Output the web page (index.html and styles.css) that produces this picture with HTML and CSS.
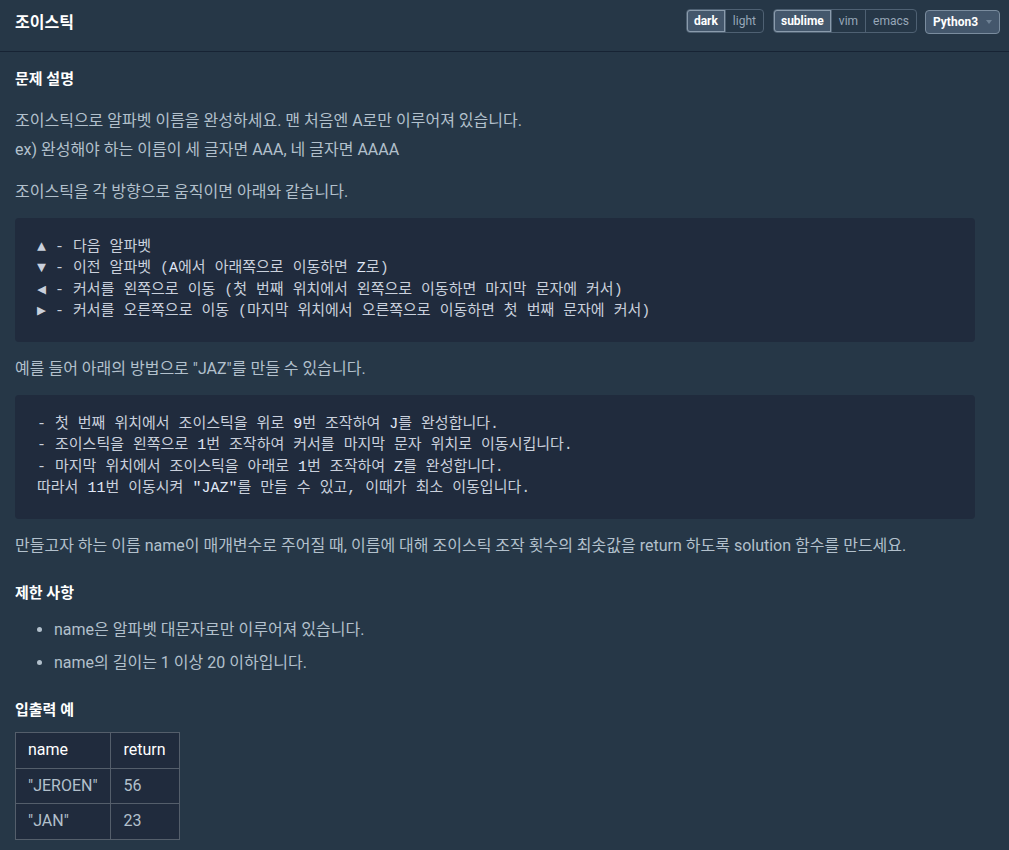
FILE: index.html
```html
<!DOCTYPE html>
<html lang="ko">
<head>
<meta charset="utf-8">
<title>조이스틱</title>
<link rel="stylesheet" href="styles.css">
</head>
<body>
<header class="topbar">
  <h1 class="title">조이스틱</h1>
  <div class="controls">
    <div class="seg">
      <span class="seg-btn active">dark</span>
      <span class="seg-btn">light</span>
    </div>
    <div class="seg">
      <span class="seg-btn active">sublime</span>
      <span class="seg-btn">vim</span>
      <span class="seg-btn">emacs</span>
    </div>
    <div class="lang-select">Python3<span class="caret"></span></div>
  </div>
</header>
<main class="content">
  <h5 class="heading first">문제 설명</h5>
  <p class="lead">조이스틱으로 알파벳 이름을 완성하세요. 맨 처음엔 A로만 이루어져 있습니다.<br>ex) 완성해야 하는 이름이 세 글자면 AAA, 네 글자면 AAAA</p>
  <p>조이스틱을 각 방향으로 움직이면 아래와 같습니다.</p>
  <div class="code">
    <span class="ln">▲ - 다음 알파벳</span>
    <span class="ln">▼ - 이전 알파벳 (<span class="hl">A</span>에서 아래쪽으로 이동하면 <span class="hl">Z</span>로)</span>
    <span class="ln">◀ - 커서를 왼쪽으로 이동 (첫 번째 위치에서 왼쪽으로 이동하면 마지막 문자에 커서)</span>
    <span class="ln">▶ - 커서를 오른쪽으로 이동 (마지막 위치에서 오른쪽으로 이동하면 첫 번째 문자에 커서)</span>
  </div>
  <p>예를 들어 아래의 방법으로 "JAZ"를 만들 수 있습니다.</p>
  <div class="code">
    <span class="ln">- 첫 번째 위치에서 조이스틱을 위로 <span class="hl">9</span>번 조작하여 <span class="hl">J</span>를 완성합니다.</span>
    <span class="ln">- 조이스틱을 왼쪽으로 <span class="hl">1</span>번 조작하여 커서를 마지막 문자 위치로 이동시킵니다.</span>
    <span class="ln">- 마지막 위치에서 조이스틱을 아래로 <span class="hl">1</span>번 조작하여 <span class="hl">Z</span>를 완성합니다.</span>
    <span class="ln">따라서 <span class="hl">11</span>번 이동시켜 <span class="hl">"JAZ"</span>를 만들 수 있고, 이때가 최소 이동입니다.</span>
  </div>
  <p>만들고자 하는 이름 name이 매개변수로 주어질 때, 이름에 대해 조이스틱 조작 횟수의 최솟값을 return 하도록 solution 함수를 만드세요.</p>
  <h5 class="heading">제한 사항</h5>
  <ul class="list">
    <li>name은 알파벳 대문자로만 이루어져 있습니다.</li>
    <li>name의 길이는 1 이상 20 이하입니다.</li>
  </ul>
  <h5 class="heading">입출력 예</h5>
  <table class="examples">
    <thead>
      <tr><th>name</th><th>return</th></tr>
    </thead>
    <tbody>
      <tr><td>"JEROEN"</td><td>56</td></tr>
      <tr><td>"JAN"</td><td>23</td></tr>
    </tbody>
  </table>
</main>
</body>
</html>
```
FILE: styles.css
```css
html, body {
  margin: 0;
  padding: 0;
  background: #263747;
}
body {
  font-family: Roboto, "Noto Sans CJK KR", sans-serif;
  color: #b2c0cc;
  font-size: 16px;
}
.topbar {
  height: 52px;
  box-sizing: border-box;
  border-bottom: 1px solid #172334;
  display: flex;
  justify-content: space-between;
  align-items: flex-start;
  padding: 9px 9px 0 15px;
}
.title {
  margin: 0;
  padding-top: 1px;
  font-size: 16px;
  font-weight: 700;
  color: #ffffff;
  line-height: 26px;
}
.controls {
  display: flex;
  gap: 8px;
  align-items: flex-start;
}
.seg {
  display: flex;
  border: 1px solid #4f6173;
  border-radius: 4px;
  height: 24px;
  box-sizing: border-box;
}
.seg + .seg {
  margin-left: 1px;
}
.seg-btn {
  font-size: 12px;
  line-height: 22px;
  padding: 0 7px;
  color: #98a8b9;
  border-left: 1px solid #4f6173;
}
.seg-btn:first-child {
  border-left: none;
}
.seg-btn.active {
  background: #44576c;
  color: #ffffff;
  font-weight: 700;
  box-shadow: inset 0 0 0 1px #8a9bac;
  border-radius: 3px 0 0 3px;
}
.lang-select {
  margin-top: 1px;
  height: 24px;
  box-sizing: border-box;
  width: 75px;
  border: 1px solid #7a8c9e;
  border-radius: 4px;
  background: #44576c;
  color: #ffffff;
  font-weight: 700;
  font-size: 12px;
  line-height: 22px;
  padding-left: 7px;
  display: flex;
  align-items: center;
  gap: 8px;
}
.caret {
  width: 0;
  height: 0;
  border-left: 3px solid transparent;
  border-right: 3px solid transparent;
  border-top: 4px solid #6e8194;
}
.content {
  padding: 0 34px 16px 15px;
}
.heading {
  margin: 22px 0 11px;
  font-size: 15px;
  font-weight: 700;
  color: #ffffff;
  line-height: 22px;
}
.heading.first {
  margin-top: 16px;
  margin-bottom: 16px;
}
p {
  margin: 0 0 12px;
  line-height: 29px;
}
p.lead {
  margin-bottom: 13px;
}
.code {
  margin: 0 0 12px;
  padding: 19px 22px 20px;
  background: #202b3d;
  border-radius: 4px;
  font-family: "Liberation Mono", "DejaVu Sans Mono", "Noto Sans CJK KR", monospace;
  font-size: 15px;
  line-height: 21.3px;
  color: #c9d0dc;
}
.ln {
  display: block;
  white-space: pre;
  height: 21.3px;
}
.hl {
  color: #e0e8f7;
}
.list {
  margin: 0;
  padding-left: 39px;
}
.list li {
  line-height: 29px;
  margin-bottom: 4px;
}
.examples {
  border-collapse: collapse;
  font-size: 16px;
  margin-top: 3px;
}
.examples th, .examples td {
  border: 1px solid #545e6b;
  background: #202b3d;
  padding: 6px 12px 6px 12px;
  line-height: 22.5px;
  text-align: left;
}
.examples th {
  color: #ffffff;
  font-weight: 400;
}
.examples td {
  color: #b2c0cc;
}
.examples td:last-child, .examples th:last-child {
  padding-left: 13px;
  padding-right: 13px;
}
```
